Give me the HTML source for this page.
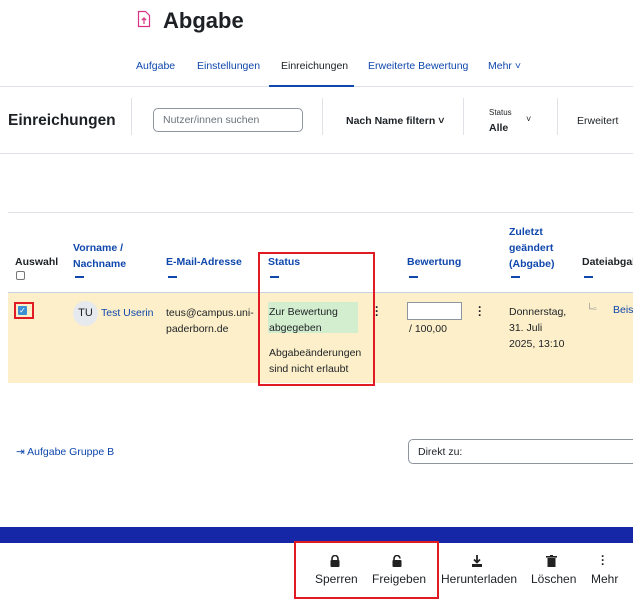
<!DOCTYPE html>
<html><head><meta charset="utf-8"><style>
*{box-sizing:border-box;margin:0;padding:0}
body{width:633px;height:599px;overflow:hidden;background:#fff;font-family:"Liberation Sans",sans-serif;color:#1d2125;position:relative;font-size:10.5px}
.a{position:absolute;white-space:nowrap}
.lk{color:#0f47ad}
.b{font-weight:bold}
.dash{position:absolute;width:9px;height:2px;background:#0f47ad}
.sep{position:absolute;top:98px;width:1px;height:37px;background:#dee2e6}
.hl{position:absolute;height:1px;background:#dee2e6}
</style></head><body>
<svg class="a" style="left:137px;top:10px" width="14" height="18" viewBox="0 0 14 18"><path d="M1.5 1.5h7l4 4v11h-11z" fill="none" stroke="#d63384" stroke-width="1.2"/><path d="M7 14V8M4.8 10.2L7 8l2.2 2.2" fill="none" stroke="#d63384" stroke-width="1.2"/></svg>
<div class="a b" style="left:163px;top:8px;font-size:22px">Abgabe</div>
<div class="a lk" style="left:136px;top:60px">Aufgabe</div>
<div class="a lk" style="left:197px;top:60px">Einstellungen</div>
<div class="a" style="left:281px;top:60px">Einreichungen</div>
<div class="a lk" style="left:368px;top:60px">Erweiterte Bewertung</div>
<div class="a lk" style="left:488px;top:60px">Mehr ˅</div>
<div class="hl" style="left:0;top:86px;width:633px"></div>
<div class="a" style="left:269px;top:85px;width:85px;height:2px;background:#0f47ad"></div>
<div class="a b" style="left:8px;top:112px;font-size:15.5px">Einreichungen</div>
<div class="sep" style="left:131px"></div><div class="sep" style="left:322px"></div><div class="sep" style="left:463px"></div><div class="sep" style="left:557px"></div>
<div class="a" style="left:153px;top:108px;width:150px;height:24px;border:1px solid #8f959e;border-radius:5px;color:#6a737b;padding:5px 9px">Nutzer/innen suchen</div>
<div class="a b" style="left:346px;top:115px">Nach Name filtern ˅</div>
<div class="a" style="left:489px;top:108px;font-size:8px">Status</div>
<div class="a b" style="left:489px;top:122px">Alle</div>
<div class="a" style="left:526px;top:114px;font-size:9px">˅</div>
<div class="a" style="left:577px;top:115px">Erweitert</div>
<div class="hl" style="left:0;top:153px;width:633px"></div>
<div class="hl" style="left:8px;top:212px;width:625px"></div>
<div class="a b" style="left:15px;top:256px">Auswahl</div>
<div class="a" style="left:16px;top:271px;width:9px;height:9px;border:1px solid #777;border-radius:2px"></div>
<div class="a b lk" style="left:73px;top:240px;line-height:16px">Vorname /<br>Nachname</div><div class="dash" style="left:75px;top:276px"></div>
<div class="a b lk" style="left:166px;top:256px">E-Mail-Adresse</div><div class="dash" style="left:168px;top:276px"></div>
<div class="a b lk" style="left:268px;top:256px">Status</div><div class="dash" style="left:270px;top:276px"></div>
<div class="a b lk" style="left:407px;top:256px">Bewertung</div><div class="dash" style="left:409px;top:276px"></div>
<div class="a b lk" style="left:509px;top:224px;line-height:16px">Zuletzt<br>geändert<br>(Abgabe)</div><div class="dash" style="left:511px;top:276px"></div>
<div class="a b" style="left:582px;top:256px">Dateiabgabe</div><div class="dash" style="left:584px;top:276px"></div>
<div class="hl" style="left:8px;top:292px;width:625px;background:#c7d2e0"></div>
<div class="a" style="left:8px;top:293px;width:625px;height:90px;background:#fcefc9"></div>
<div class="a" style="left:14px;top:302px;width:20px;height:17px;border:2px solid #e01b24"></div>
<div class="a" style="left:18px;top:306px;width:9px;height:9px;background:#3b8fd4;border-radius:1px;color:#fff;font-size:8px;line-height:9px;text-align:center">✓</div>
<div class="a" style="left:73px;top:301px;width:25px;height:25px;border-radius:50%;background:#e6e9ee;text-align:center;line-height:25px;font-size:11px">TU</div>
<div class="a lk" style="left:101px;top:307px">Test Userin</div>
<div class="a" style="left:166px;top:305px;line-height:16px">teus@campus.uni-<br>paderborn.de</div>
<div class="a" style="left:268px;top:302px;width:90px;height:31px;background:#d3eecf"></div>
<div class="a" style="left:269px;top:304px;line-height:16px">Zur Bewertung<br>abgegeben</div>
<div class="a" style="left:269px;top:345px;line-height:16px">Abgabeänderungen<br>sind nicht erlaubt</div>
<div class="a" style="left:258px;top:252px;width:117px;height:134px;border:2px solid #e01b24"></div>
<div class="a b" style="left:375px;top:305px;font-size:12px;line-height:4px">·<br>·<br>·</div>
<div class="a" style="left:407px;top:302px;width:55px;height:18px;background:#fff;border:1px solid #8f959e"></div>
<div class="a" style="left:409px;top:323px">/ 100,00</div>
<div class="a b" style="left:478px;top:305px;font-size:12px;line-height:4px">·<br>·<br>·</div>
<div class="a" style="left:509px;top:304px;line-height:16px">Donnerstag,<br>31. Juli<br>2025, 13:10</div>
<div class="a" style="left:586px;top:304px;color:#999;font-size:10px">└▫</div>
<div class="a lk" style="left:613px;top:304px">Beisp</div>
<div class="a lk" style="left:16px;top:446px">⇥ Aufgabe Gruppe B</div>
<div class="a" style="left:408px;top:439px;width:240px;height:25px;border:1px solid #8f959e;border-radius:5px;padding:6px 9px">Direkt zu:</div>
<div class="a" style="left:0;top:527px;width:633px;height:16px;background:#1526a6"></div>
<svg class="a" style="left:329px;top:555px" width="12" height="12" viewBox="0 0 12 12"><path d="M3 5V3.5a3 3 0 0 1 6 0V5" fill="none" stroke="#222" stroke-width="1.6"/><rect x="1.5" y="5" width="9" height="7" rx="1" fill="#222"/></svg>
<svg class="a" style="left:391px;top:555px" width="12" height="12" viewBox="0 0 12 12"><path d="M3 5V3.5a3 3 0 0 1 6 0" fill="none" stroke="#222" stroke-width="1.6"/><rect x="1.5" y="5" width="9" height="7" rx="1" fill="#222"/></svg>
<svg class="a" style="left:471px;top:555px" width="12" height="12" viewBox="0 0 12 12"><path d="M6 0v7M3 4.5L6 7.5 9 4.5" fill="none" stroke="#222" stroke-width="1.8"/><rect x="1" y="9" width="10" height="3" fill="#222"/></svg>
<svg class="a" style="left:546px;top:555px" width="11" height="12" viewBox="0 0 11 12"><rect x="0" y="1" width="11" height="1.6" fill="#222"/><rect x="4" y="0" width="3" height="1.5" fill="#222"/><rect x="1.5" y="3" width="8" height="9" fill="#222"/></svg>
<div class="a b" style="left:601px;top:554px;font-size:12px;line-height:4px">·<br>·<br>·</div>
<div class="a" style="left:315px;top:572px;font-size:12px">Sperren</div>
<div class="a" style="left:372px;top:572px;font-size:12px">Freigeben</div>
<div class="a" style="left:441px;top:572px;font-size:12px">Herunterladen</div>
<div class="a" style="left:531px;top:572px;font-size:12px">Löschen</div>
<div class="a" style="left:591px;top:572px;font-size:12px">Mehr</div>
<div class="a" style="left:294px;top:541px;width:145px;height:58px;border:2px solid #e01b24"></div>
</body></html>
